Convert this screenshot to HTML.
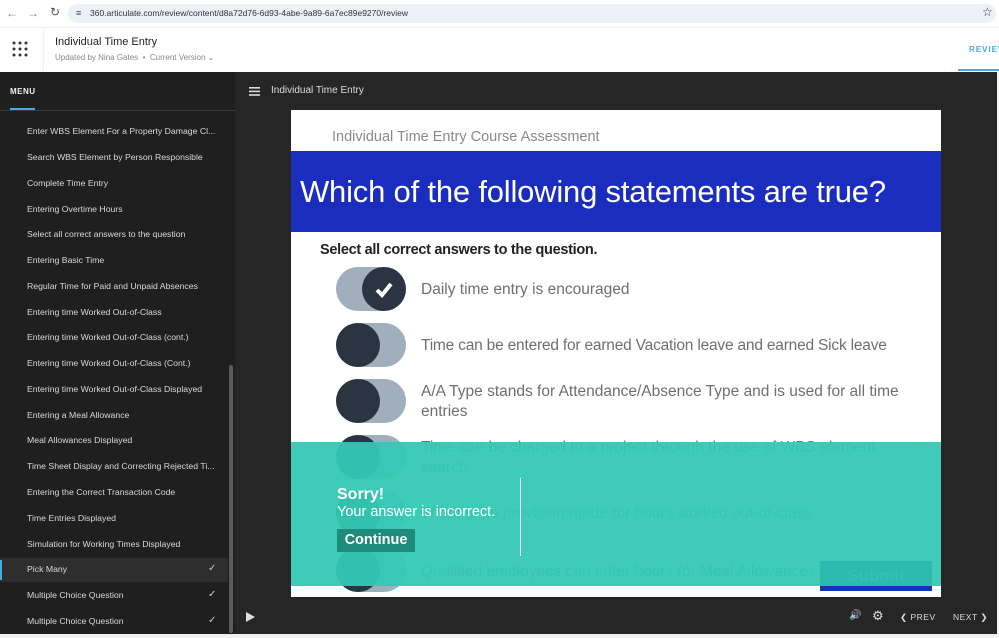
<!DOCTYPE html>
<html><head><meta charset="utf-8"><style>
*{margin:0;padding:0;box-sizing:border-box}
body{width:999px;height:638px;overflow:hidden;background:#fff;font-family:"Liberation Sans",sans-serif;position:relative}
.abs{position:absolute}
.side{left:0;top:72px;width:235px;height:562px;background:#1f1f1f}
.item{position:absolute;left:27px;font-size:8.7px;color:#d8d8d8;white-space:nowrap}
.chk{position:absolute;left:208px;font-size:10px;color:#ccc}
.opt{position:absolute;left:421px;font-size:15.5px;color:#6f6f6f;width:490px;line-height:20px;white-space:nowrap}
.tg{position:absolute;left:336px;width:70px;height:44px;border-radius:22px;background:#a0afbb}
.tg i{position:absolute;top:0;width:44px;height:44px;border-radius:50%;background:#2b3541}
</style></head><body>
<div class="abs" style="left:0;top:0;width:999px;height:27px;background:#fff"></div>
<div class="abs" style="left:6px;top:6px;font-size:12px;color:#888">&#8592;</div>
<div class="abs" style="left:27px;top:6px;font-size:12px;color:#888">&#8594;</div>
<div class="abs" style="left:50px;top:5px;font-size:12px;color:#555">&#8635;</div>
<div class="abs" style="left:68px;top:4px;width:928px;height:19px;border-radius:10px;background:#eef0f8"></div>
<div class="abs" style="left:76px;top:8px;font-size:9px;color:#444">&#8801;</div>
<div class="abs" style="left:90px;top:8px;font-size:8.5px;color:#333">360.articulate.com/review/content/d8a72d76-6d93-4abe-9a89-6a7ec89e9270/review</div>
<div class="abs" style="left:982px;top:5px;font-size:12px;color:#333">&#9734;</div>
<div class="abs" style="left:0;top:27px;width:999px;height:45px;background:#fff;border-top:1px solid #eee"></div>
<div class="abs" style="left:43px;top:29px;width:1px;height:42px;background:#eee"></div>
<svg class="abs" style="left:12px;top:41px" width="16" height="16"><g fill="#333"><circle cx="2" cy="2" r="1.5"/><circle cx="8" cy="2" r="1.5"/><circle cx="14" cy="2" r="1.5"/><circle cx="2" cy="8" r="1.5"/><circle cx="8" cy="8" r="1.5"/><circle cx="14" cy="8" r="1.5"/><circle cx="2" cy="14" r="1.5"/><circle cx="8" cy="14" r="1.5"/><circle cx="14" cy="14" r="1.5"/></g></svg>
<div class="abs" style="left:55px;top:36px;font-size:11px;color:#222">Individual Time Entry</div>
<div class="abs" style="left:55px;top:53px;font-size:8px;color:#888">Updated by Nina Gates &nbsp;•&nbsp; Current Version ⌄</div>
<div class="abs" style="left:969px;top:45px;font-size:8px;color:#4aa8e0;letter-spacing:1px;font-weight:bold">REVIEW</div>
<div class="abs" style="left:958px;top:69px;width:41px;height:2px;background:#4aa8e0"></div>
<div class="abs" style="left:235px;top:72px;width:762px;height:562px;background:#262626"></div>
<div class="abs" style="left:997px;top:72px;width:2px;height:566px;background:#f2f2f2"></div>
<div class="abs" style="left:0;top:634px;width:999px;height:4px;background:#f2f2f2"></div>
<div class="abs side"></div>
<div class="abs" style="left:10px;top:87px;font-size:8px;color:#eee;font-weight:bold;letter-spacing:.5px">MENU</div>
<div class="abs" style="left:10px;top:108px;width:25px;height:2px;background:#4aa8e0"></div>
<div class="abs" style="left:0;top:110px;width:235px;height:1px;background:#3a3a3a"></div>
<div class="abs" style="left:0;top:558px;width:228px;height:24px;background:#2e2e2e"></div>
<div class="abs" style="left:0;top:560px;width:2px;height:20px;background:#4aa8e0"></div>
<div class="abs" style="left:229px;top:365px;width:4px;height:268px;border-radius:2px;background:#5a5a5a"></div>
<div class="item" style="top:126px">Enter WBS Element For a Property Damage Cl...</div>
<div class="item" style="top:152px">Search WBS Element by Person Responsible</div>
<div class="item" style="top:178px">Complete Time Entry</div>
<div class="item" style="top:204px">Entering Overtime Hours</div>
<div class="item" style="top:229px">Select all correct answers to the question</div>
<div class="item" style="top:255px">Entering Basic Time</div>
<div class="item" style="top:281px">Regular Time for Paid and Unpaid Absences</div>
<div class="item" style="top:307px">Entering time Worked Out-of-Class</div>
<div class="item" style="top:332px">Entering time Worked Out-of-Class (cont.)</div>
<div class="item" style="top:358px">Entering time Worked Out-of-Class (Cont.)</div>
<div class="item" style="top:384px">Entering time Worked Out-of-Class Displayed</div>
<div class="item" style="top:410px">Entering a Meal Allowance</div>
<div class="item" style="top:435px">Meal Allowances Displayed</div>
<div class="item" style="top:461px">Time Sheet Display and Correcting Rejected Ti...</div>
<div class="item" style="top:487px">Entering the Correct Transaction Code</div>
<div class="item" style="top:513px">Time Entries Displayed</div>
<div class="item" style="top:539px">Simulation for Working Times Displayed</div>
<div class="item" style="top:564px">Pick Many</div><div class="chk" style="top:563px">✓</div>
<div class="item" style="top:590px">Multiple Choice Question</div><div class="chk" style="top:589px">✓</div>
<div class="item" style="top:616px">Multiple Choice Question</div><div class="chk" style="top:615px">✓</div>
<svg class="abs" style="left:249px;top:87px" width="11" height="9"><g fill="#ddd"><rect width="11" height="1.6"/><rect y="3.6" width="11" height="1.6"/><rect y="7.2" width="11" height="1.6"/></g></svg>
<div class="abs" style="left:271px;top:85px;font-size:10px;color:#ddd">Individual Time Entry</div>
<div class="abs" style="left:291px;top:110px;width:650px;height:487px;background:#fff;overflow:hidden">
<div class="abs" style="left:41px;top:19px;font-size:14.5px;color:#8a8a8a">Individual Time Entry Course Assessment</div>
<div class="abs" style="left:0;top:41px;width:650px;height:81px;background:#1a2dbf"></div>
<div class="abs" style="left:9px;top:64px;font-size:31px;color:#fff;white-space:nowrap;letter-spacing:-0.2px">Which of the following statements are true?</div>
<div class="abs" style="left:29px;top:132px;font-size:14.5px;color:#222;font-weight:bold;letter-spacing:-0.3px">Select all correct answers to the question.</div>
</div>
<div class="tg" style="top:267px"><i style="left:26px"></i><svg class="abs" style="left:38px;top:12px" width="20" height="20"><path d="M3 11 L8 16 L17 5" stroke="#fff" stroke-width="4" fill="none"/></svg></div>
<div class="opt" style="top:280px">Daily time entry is encouraged</div>
<div class="tg" style="top:323px"><i style="left:0"></i></div>
<div class="opt" style="top:336px;letter-spacing:-0.2px">Time can be entered for earned Vacation leave and earned Sick leave</div>
<div class="tg" style="top:379px"><i style="left:0"></i></div>
<div class="opt" style="top:382px">A/A Type stands for Attendance/Absence Type and is used for all time<br>entries</div>
<div class="tg" style="top:435px"><i style="left:0"></i></div>
<div class="opt" style="top:438px">Time can be charged to a project through the use of WBS element<br>search</div>
<div class="tg" style="top:491px"><i style="left:0"></i></div>
<div class="opt" style="top:504px">There is no provision made for hours worked out-of-class</div>
<div class="tg" style="top:548px"><i style="left:0"></i></div>
<div class="opt" style="top:562px">Qualified employees can enter hours for Meal Allowances</div>
<div class="abs" style="left:820px;top:561px;width:112px;height:30px;background:#1a2dbf"></div>
<div class="abs" style="left:820px;top:561px;width:112px;height:26px;text-align:center;font-size:17px;font-weight:bold;color:#fff;line-height:30px">Submit</div>
<div class="abs" style="left:291px;top:442px;width:650px;height:144px;background:rgba(52,201,181,0.95)"></div>
<div class="abs" style="left:820px;top:561px;width:112px;height:25px;background:rgba(40,180,165,0.5)"></div>
<div class="abs" style="left:337px;top:486px;font-size:16px;font-weight:bold;color:#fff">Sorry!</div>
<div class="abs" style="left:337px;top:504px;font-size:14.5px;color:#fff">Your answer is incorrect.</div>
<div class="abs" style="left:337px;top:529px;width:78px;height:23px;background:#1e8c7c;color:#fff;font-weight:bold;font-size:14.5px;text-align:center;line-height:23px">Continue</div>
<div class="abs" style="left:520px;top:478px;width:1px;height:78px;background:#fff"></div>
<svg class="abs" style="left:245px;top:611px" width="11" height="12"><path d="M1 1 L10 6 L1 11Z" fill="#ddd"/></svg>
<div class="abs" style="left:849px;top:610px;font-size:10px;color:#ddd">&#128266;</div>
<div class="abs" style="left:872px;top:608px;font-size:13px;color:#ddd">&#9881;</div>
<div class="abs" style="left:900px;top:612px;font-size:8.5px;color:#ddd;letter-spacing:.5px">&#10094; PREV</div>
<div class="abs" style="left:953px;top:612px;font-size:8.5px;color:#ddd;letter-spacing:.5px">NEXT &#10095;</div>
</body></html>
